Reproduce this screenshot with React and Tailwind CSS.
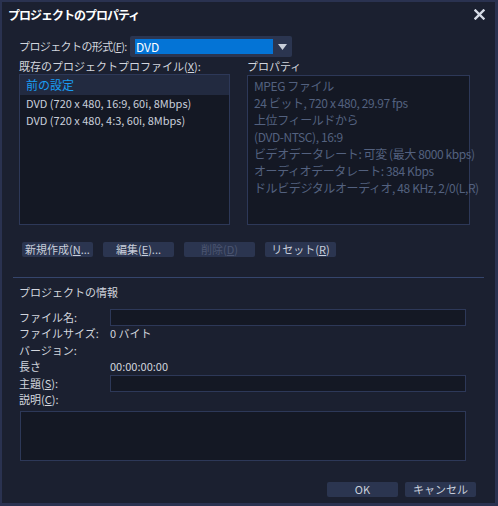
import React from 'react';

const font = { fontFamily: '"Noto Sans CJK JP", "Noto Sans", sans-serif' };

const Btn = ({ children, disabled, w = 'w-[71px]' }) => (
  <button
    className={`${w} h-[15px] rounded-[2px] bg-[#2b3550] text-[11px] leading-none flex items-center justify-center whitespace-nowrap ${
      disabled ? 'text-[#4c5672]' : 'text-[#c9cfdb]'
    }`}
  >
    {children}
  </button>
);

const U = ({ children }) => <span className="underline">{children}</span>;

const App = () => {
  const props = [
    'MPEG ファイル',
    '24 ビット, 720 x 480, 29.97 fps',
    '上位フィールドから',
    '(DVD-NTSC),  16:9',
    'ビデオデータレート: 可変 (最大  8000 kbps)',
    'オーディオデータレート: 384 Kbps',
    'ドルビデジタルオーディオ, 48 KHz, 2/0(L,R)',
  ];

  return (
    <div
      style={font}
      className="w-[498px] h-[506px] bg-[#1b2030] border-t-2 border-l-2 border-r-[3px] border-b-[3px] border-[#2a3250] text-[#d2d6de] text-[11px] flex flex-col overflow-hidden whitespace-nowrap"
    >
      {/* Title bar */}
      <div className="h-[25px] flex items-center justify-between pl-[6px] pr-[10px]">
        <span className="text-white font-bold text-[12px] tracking-[-1px]">プロジェクトのプロパティ</span>
        <svg width="11" height="11" viewBox="0 0 11 11">
          <path d="M1.5 1.5l8 8M9.5 1.5l-8 8" stroke="#d6dbe6" strokeWidth="2.4" strokeLinecap="square" />
        </svg>
      </div>

      <div className="pl-[17px] pr-[25px]">
        {/* Format row */}
        <div className="flex items-center mt-[9px] h-[21px]">
          <span className="w-[111px] shrink-0 overflow-hidden tracking-[-0.6px]">プロジェクトの形式(<U>F</U>):</span>
          <div className="w-[162px] shrink-0 h-[21px] rounded-[2px] bg-[#2b3550] flex items-center pl-[5px] pr-[1px]">
            <div className="w-[138px] h-[15px] bg-[#0474d6] text-white text-[12px] leading-none flex items-center pl-[1px]">DVD</div>
            <div className="flex-1 flex items-center justify-center">
              <svg width="9" height="6" viewBox="0 0 9 6">
                <path d="M0 0h9L4.5 6z" fill="#c9cfdb" />
              </svg>
            </div>
          </div>
        </div>

        {/* Lists */}
        <div className="flex mt-[1px]">
          <div className="w-[212px]">
            <div className="h-[16px] leading-[16px]">既存のプロジェクトプロファイル(<U>X</U>):</div>
            <div className="h-[151px] border border-[#2d3858] bg-[#141824] text-[#c9cfdb]">
              <div className="h-[20px] leading-[20px] bg-[#222a40] text-[#1a9cf2] text-[12px] pl-[6px]">前の設定</div>
              <div className="h-[17px] leading-[17px] pl-[6px]">DVD (720 x 480, 16:9, 60i, 8Mbps)</div>
              <div className="h-[17px] leading-[17px] pl-[6px]">DVD (720 x 480, 4:3, 60i, 8Mbps)</div>
            </div>
          </div>
          <div className="w-[223px] ml-[17px]">
            <div className="h-[16px] leading-[16px]">プロパティ</div>
            <div className="h-[150px] mt-[1px] border border-[#2d3858] bg-[#141824] text-[#53617f] text-[12px] pl-[6px] pt-[1px]">
              {props.map((p) => (
                <div key={p} className="h-[17px] leading-[17px] tracking-[-0.4px]">{p}</div>
              ))}
            </div>
          </div>
        </div>

        {/* Buttons */}
        <div className="flex gap-[10px] mt-[17px] pl-[3px]">
          <Btn>新規作成(<U>N</U>...</Btn>
          <Btn>編集(<U>E</U>)...</Btn>
          <Btn disabled>削除(<U>D</U>)</Btn>
          <Btn>リセット(<U>R</U>)</Btn>
        </div>
      </div>

      {/* Separator */}
      <div className="mx-[11px] mt-[20px] h-px bg-[#35456c]" />

      <div className="pl-[17px] pr-[29px]">
        <div className="mt-[6px] h-[16px] leading-[16px]">プロジェクトの情報</div>

        <div className="mt-[9px] flex flex-col">
          <div className="flex items-center h-[16px]">
            <span className="w-[91px]">ファイル名:</span>
            <div className="flex-1 h-[17px] border border-[#2d3858] bg-[#141824]" />
          </div>
          <div className="flex items-center h-[17px]">
            <span className="w-[91px]">ファイルサイズ:</span>
            <span>0 バイト</span>
          </div>
          <div className="flex items-center h-[16px]">
            <span className="w-[91px]">バージョン:</span>
          </div>
          <div className="flex items-center h-[17px]">
            <span className="w-[91px]">長さ</span>
            <span>00:00:00:00</span>
          </div>
          <div className="flex items-center h-[16px]">
            <span className="w-[91px]">主題(<U>S</U>):</span>
            <div className="flex-1 h-[17px] border border-[#2d3858] bg-[#141824]" />
          </div>
          <div className="flex items-center h-[17px]">
            <span className="w-[91px]">説明(<U>C</U>):</span>
          </div>
          <div className="ml-[1px] mt-[3px] h-[50px] border border-[#2d3858] bg-[#141824]" />
        </div>

        <div className="flex justify-end gap-[7px] mt-[21px] mr-[-10px]">
          <Btn w="w-[71px]">OK</Btn>
          <Btn w="w-[71px]">キャンセル</Btn>
        </div>
      </div>
    </div>
  );
};

export default App;
